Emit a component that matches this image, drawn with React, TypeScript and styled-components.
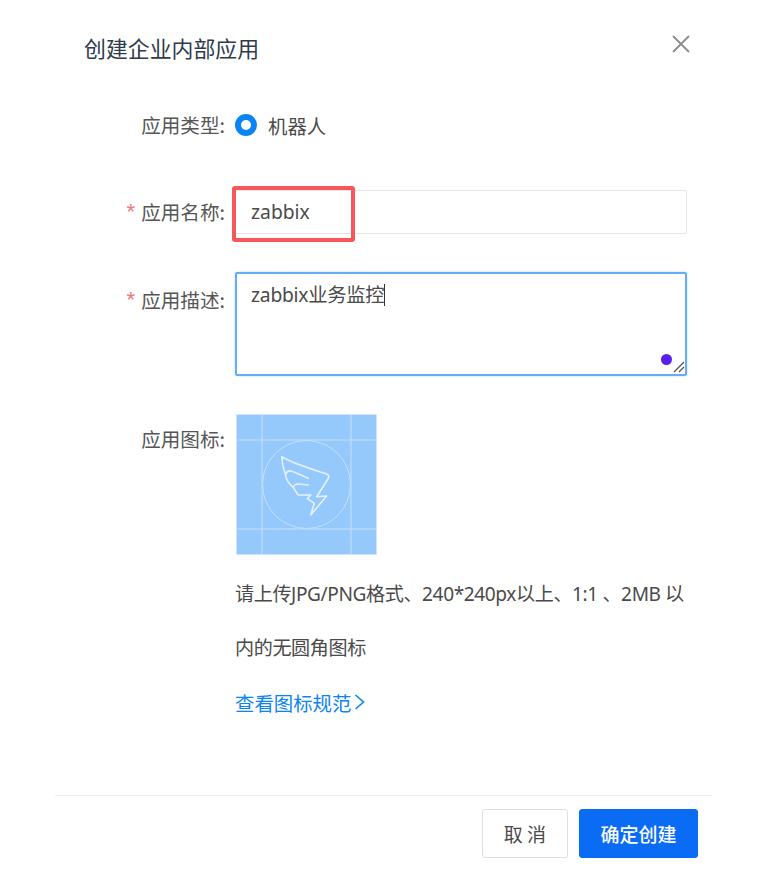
import React from "react";
import styled, { createGlobalStyle } from "styled-components";

const Global = createGlobalStyle`
  html, body { margin: 0; padding: 0; background: #fff; }
  body { font-family: "Noto Sans CJK SC", "Noto Sans", sans-serif; color: #4a4a4a; }
  * { box-sizing: border-box; }
`;

const Dialog = styled.div`
  width: 768px;
  height: 881px;
  display: flex;
  flex-direction: column;
  background: #fff;
  overflow: hidden;
`;

const Header = styled.header`
  height: 100px;
  padding: 29px 78px 0 84px;
  display: flex;
  justify-content: space-between;
  align-items: flex-start;
`;

const Title = styled.h1`
  margin: 0;
  font-size: 21.9px;
  line-height: 38px;
  font-weight: 400;
  color: #2f3a4c;
`;

const CloseIcon = styled.svg`
  width: 18px;
  height: 18px;
  margin-top: 6px;
`;

const Form = styled.form`
  flex: 1;
  display: flex;
  flex-direction: column;
  padding: 0 81px 0 0;
`;

const Row = styled.div<{ $h: number; $mt?: number }>`
  display: grid;
  grid-template-columns: 235px 1fr;
  min-height: ${(p) => p.$h}px;
  margin-top: ${(p) => p.$mt ?? 0}px;
`;

const Label = styled.label<{ $lh: number }>`
  display: flex;
  justify-content: flex-end;
  padding-right: 10px;
  font-size: 19.6px;
  line-height: ${(p) => p.$lh}px;
  color: #565656;
  white-space: nowrap;
`;

const Star = styled.span`
  color: #f0787a;
  font-family: "Liberation Sans", sans-serif;
  font-size: 22px;
  margin-right: 6px;
`;

const RadioLine = styled.div`
  display: flex;
  align-items: center;
  gap: 11px;
  height: 50px;
  font-size: 19.4px;
  color: #4a4a4a;
`;

const RadioDot = styled.span`
  width: 22px;
  height: 22px;
  border-radius: 50%;
  border: 6px solid #0a84f5;
  background: #fff;
`;

const Field = styled.div`
  position: relative;
  height: 44px;
  border: 1px solid #e3e5e8;
  border-radius: 2px;
  padding: 0 15px;
  font-size: 19.3px;
  line-height: 42px;
  color: #4a4a4a;
  font-family: "Noto Sans", "Noto Sans CJK SC", sans-serif;
`;

const Highlight = styled.div`
  position: absolute;
  left: -4px;
  top: -5px;
  width: 123px;
  height: 56px;
  border: 4px solid #f7575a;
  border-radius: 3px;
`;

const Area = styled.div`
  position: relative;
  height: 104px;
  border: 2px solid #63aef7;
  border-radius: 2px;
  box-shadow: 0 0 2px #a9d2fb;
  padding: 0 14px;
  font-size: 19.3px;
  letter-spacing: -0.25px;
  line-height: 41px;
  color: #4a4a4a;
  font-family: "Noto Sans", "Noto Sans CJK SC", sans-serif;
`;

const Caret = styled.span`
  display: inline-block;
  width: 1px;
  height: 22px;
  background: #333;
  vertical-align: -4px;
`;

const PurpleDot = styled.span`
  position: absolute;
  right: 13px;
  bottom: 9px;
  width: 11px;
  height: 11px;
  border-radius: 50%;
  background: #5a1ff0;
`;

const Resize = styled.svg`
  position: absolute;
  right: 0;
  bottom: 1px;
  width: 12px;
  height: 12px;
`;

const Col = styled.div`
  display: flex;
  flex-direction: column;
`;

const IconBox = styled.div`
  width: 141px;
  height: 141px;
  margin-left: 1px;
`;

const Hint = styled.p`
  margin: 12px 0 0;
  font-size: 19.1px;
  line-height: 54px;
  color: #4a4a4a;
  font-family: "Noto Sans", "Noto Sans CJK SC", sans-serif;
  letter-spacing: -0.4px;
`;

const SpecLink = styled.a`
  display: flex;
  align-items: center;
  gap: 3px;
  height: 54px;
  font-size: 19.4px;
  color: #0a84f5;
  text-decoration: none;
`;

const Footer = styled.footer`
  margin: 0 56px 22px 55px;
  height: 64px;
  border-top: 1px solid #eeeff1;
  display: flex;
  justify-content: flex-end;
  align-items: flex-start;
  gap: 11px;
  padding: 13px 14px 0 0;
`;

const Button = styled.button<{ $primary?: boolean }>`
  height: 49px;
  width: ${(p) => (p.$primary ? 119 : 86)}px;
  border-radius: 3px;
  border: 1px solid ${(p) => (p.$primary ? "#0a6cf5" : "#dedfe1")};
  background: ${(p) => (p.$primary ? "#0a6cf5" : "#fff")};
  color: ${(p) => (p.$primary ? "#fff" : "#4a4a4a")};
  font-family: "Noto Sans CJK SC", sans-serif;
  font-size: 19px;
  font-weight: ${(p) => (p.$primary ? 500 : 400)};
  padding: 0;
`;

const Logo = () => (
  <svg width="141" height="141" viewBox="0 0 141 141">
    <rect x="0.5" y="0.5" width="140" height="140" fill="#96c9fb" stroke="#d4e9fd" strokeDasharray="2 2" />
    <g stroke="#c4e1fd" strokeWidth="1" fill="none">
      <path d="M26 0V141M115 0V141M0 26H141M0 115H141" />
      <circle cx="70.5" cy="70.5" r="44" />
    </g>
    <g stroke="#e3f1fe" strokeWidth="1.6" fill="none" strokeLinejoin="round" strokeLinecap="round">
      <path d="M45.7 42.7C58 50 76 55 90.7 60C93 61 93 63 92.3 64.3L80.7 82.7L90.7 82L74.7 101L78.3 89.3L71.3 84.7L74.7 81L62.3 81C60 78 58 75 57.3 73.3C52 69 50 65 49.7 61C47 54 46 48 45.7 42.7Z" />
      <path d="M49.7 60C51 57 53 56.5 55 57C61 59 67 62 72.3 64.3" />
      <path d="M57.3 73.3C58 71 60 70 62.3 70L72.3 71" />
    </g>
  </svg>
);

export default function App() {
  return (
    <>
      <Global />
      <Dialog>
        <Header>
          <Title>创建企业内部应用</Title>
          <CloseIcon viewBox="0 0 18 18">
            <path d="M1 1L17 17M17 1L1 17" stroke="#8c8c8c" strokeWidth="1.8" fill="none" />
          </CloseIcon>
        </Header>
        <Form>
          <Row $h={50}>
            <Label $lh={50}>应用类型:</Label>
            <RadioLine>
              <RadioDot />
              机器人
            </RadioLine>
          </Row>
          <Row $h={44} $mt={40}>
            <Label $lh={44}><Star>*</Star>应用名称:</Label>
            <Field>
              zabbix
              <Highlight />
            </Field>
          </Row>
          <Row $h={104} $mt={38}>
            <Label $lh={56}><Star>*</Star>应用描述:</Label>
            <Area>
              zabbix业务监控<Caret />
              <PurpleDot />
              <Resize viewBox="0 0 12 12">
                <path d="M1 11L11 1M6 11L11 6" stroke="#555" strokeWidth="1.3" fill="none" />
              </Resize>
            </Area>
          </Row>
          <Row $h={310} $mt={38}>
            <Label $lh={50}>应用图标:</Label>
            <Col>
              <IconBox><Logo /></IconBox>
              <Hint>请上传JPG/PNG格式、240*240px以上、1:1 、2MB 以内的无圆角图标</Hint>
              <SpecLink href="#">
                查看图标规范
                <svg width="11" height="16" viewBox="0 0 11 16">
                  <path d="M1.5 1L9.5 8L1.5 15" stroke="#0a84f5" strokeWidth="1.6" fill="none" />
                </svg>
              </SpecLink>
            </Col>
          </Row>
        </Form>
        <Footer>
          <Button>取 消</Button>
          <Button $primary>确定创建</Button>
        </Footer>
      </Dialog>
    </>
  );
}
